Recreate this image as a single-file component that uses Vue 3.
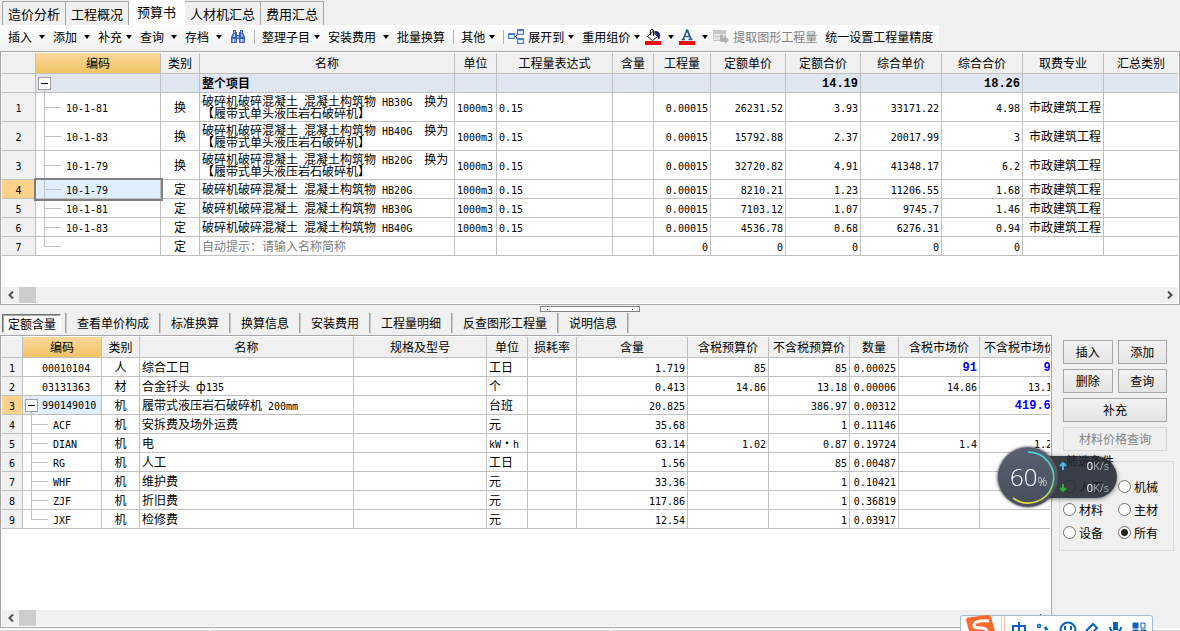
<script setup>
import { ref } from 'vue'

const viewTabs = ['造价分析', '工程概况', '预算书', '人材机汇总', '费用汇总']
const activeView = ref('预算书')

const detailTabs = ['定额含量', '查看单价构成', '标准换算', '换算信息', '安装费用', '工程量明细', '反查图形工程量', '说明信息']
const activeDetail = ref('定额含量')

const tools = [
  { text: '插入', menu: 'wide' },
  { text: '添加', menu: 'wide' },
  { text: '补充', menu: 'tight' },
  { text: '查询', menu: 'wide' },
  { text: '存档', menu: 'wide' },
  { icon: 'find', label: '查找' },
  { sep: true },
  { text: '整理子目', menu: 'tight' },
  { text: '安装费用', menu: 'wide' },
  { text: '批量换算' },
  { sep: true },
  { text: '其他', menu: 'tight' },
  { sep: true },
  { icon: 'tree', text: '展开到', menu: 'tight', near: true },
  { text: '重用组价', menu: 'tight' },
  { icon: 'fill', label: '填充颜色', menu: 'wide', near: true },
  { icon: 'font', label: '字体颜色', menu: 'wide', near: true },
  { icon: 'extract', text: '提取图形工程量', disabled: true, near: true },
  { text: '统一设置工程量精度' }
]

const budgetCols = [
  { t: '', w: 34, k: 'no' },
  { t: '编码', w: 125, k: 'code' },
  { t: '类别', w: 39, k: 'mid' },
  { t: '名称', w: 255, k: 'txt' },
  { t: '单位', w: 42, k: 'txt' },
  { t: '工程量表达式', w: 116, k: 'txt' },
  { t: '含量', w: 41, k: 'num' },
  { t: '工程量', w: 57, k: 'num' },
  { t: '定额单价', w: 75, k: 'num' },
  { t: '定额合价', w: 75, k: 'num' },
  { t: '综合单价', w: 81, k: 'num' },
  { t: '综合合价', w: 81, k: 'num' },
  { t: '取费专业', w: 81, k: 'major' },
  { t: '汇总类别', w: 0, k: 'txt' }
]
const rock = '破碎机破碎混凝土 混凝土构筑物 '
const swap = '  换为\n【履带式单头液压岩石破碎机】'
const city = '市政建筑工程'
const budgetRows = [
  { cls: 'sum', c: ['', '', '', '整个项目', '', '', '', '', '', '14.19', '', '18.26', '', ''] },
  { cls: 'tall', c: ['1', '10-1-81', '换', rock + 'HB30G' + swap, '1000m3', '0.15', '', '0.00015', '26231.52', '3.93', '33171.22', '4.98', city, ''] },
  { cls: 'tall', c: ['2', '10-1-83', '换', rock + 'HB40G' + swap, '1000m3', '0.15', '', '0.00015', '15792.88', '2.37', '20017.99', '3', city, ''] },
  { cls: 'tall', c: ['3', '10-1-79', '换', rock + 'HB20G' + swap, '1000m3', '0.15', '', '0.00015', '32720.82', '4.91', '41348.17', '6.2', city, ''] },
  { cls: 'current framed', c: ['4', '10-1-79', '定', rock + 'HB20G', '1000m3', '0.15', '', '0.00015', '8210.21', '1.23', '11206.55', '1.68', city, ''] },
  { c: ['5', '10-1-81', '定', rock + 'HB30G', '1000m3', '0.15', '', '0.00015', '7103.12', '1.07', '9745.7', '1.46', city, ''] },
  { c: ['6', '10-1-83', '定', rock + 'HB40G', '1000m3', '0.15', '', '0.00015', '4536.78', '0.68', '6276.31', '0.94', city, ''] },
  { cls: 'end hint', c: ['7', '', '定', '自动提示：请输入名称简称', '', '', '', '0', '0', '0', '0', '0', '', ''] }
]

const detailCols = [
  { t: '', w: 21, k: 'no' },
  { t: '编码', w: 79, k: 'code' },
  { t: '类别', w: 38, k: 'mid' },
  { t: '名称', w: 214, k: 'txt' },
  { t: '规格及型号', w: 133, k: 'txt' },
  { t: '单位', w: 41, k: 'txt' },
  { t: '损耗率', w: 49, k: 'num' },
  { t: '含量', w: 111, k: 'num' },
  { t: '含税预算价', w: 81, k: 'num' },
  { t: '不含税预算价', w: 81, k: 'num' },
  { t: '数量', w: 49, k: 'num' },
  { t: '含税市场价', w: 81, k: 'num market' },
  { t: '不含税市场价', w: 81, k: 'num market' }
]
const detailRows = [
  { cls: 'leaf adjusted', c: ['1', '00010104', '人', '综合工日', '', '工日', '', '1.719', '85', '85', '0.00025', '91', '91'] },
  { cls: 'leaf', c: ['2', '03131363', '材', '合金钎头 ф135', '', '个', '', '0.413', '14.86', '13.18', '0.00006', '14.86', '13.18'] },
  { cls: 'parent current adjusted', c: ['3', '990149010', '机', '履带式液压岩石破碎机 200mm', '', '台班', '', '20.825', '', '386.97', '0.00312', '', '419.64'] },
  { c: ['4', 'ACF', '机', '安拆费及场外运费', '', '元', '', '35.68', '', '1', '0.11146', '', '1'] },
  { c: ['5', 'DIAN', '机', '电', '', 'kW·h', '', '63.14', '1.02', '0.87', '0.19724', '1.4', '1.24'] },
  { c: ['6', 'RG', '机', '人工', '', '工日', '', '1.56', '', '85', '0.00487', '', '91'] },
  { c: ['7', 'WHF', '机', '维护费', '', '元', '', '33.36', '', '1', '0.10421', '', '1'] },
  { c: ['8', 'ZJF', '机', '折旧费', '', '元', '', '117.86', '', '1', '0.36819', '', '1'] },
  { cls: 'end', c: ['9', 'JXF', '机', '检修费', '', '元', '', '12.54', '', '1', '0.03917', '', '1'] }
]

// Latin runs use a half-width monospace face next to the full-width characters.
const runs = (s) => (s.match(/[\x20-\x7e]+|[^\x20-\x7e]+/g) || []).map((t) => ({ t, latin: /^[\x20-\x7e]/.test(t) }))

const kinds = ['人工', '机械', '材料', '主材', '设备', '所有']
const kind = ref('所有')
</script>

<template>
  <div class="app">
    <nav class="views">
      <button v-for="t in viewTabs" :key="t" type="button" :class="{ active: t === activeView }" @click="activeView = t">{{ t }}</button>
    </nav>

    <div class="toolbar" role="toolbar">
      <template v-for="(t, i) in tools" :key="i">
        <span v-if="t.sep" class="sep"></span>
        <button v-else type="button" class="tool" :class="[t.menu, { near: t.near }]" :disabled="t.disabled" :aria-label="t.label">
          <svg v-if="t.icon === 'find'" class="ico" viewBox="0 0 16 16">
            <path d="M3 1h3v2h1v3h2V3h1V1h3v3l2 4v6h-6v-4H7v4H1V8l2-4z" fill="#3a62ad" />
            <path d="M4 2h1v2H4zM11 2h1v2h-1zM4 5h1v3H3zM11 5h1l1 3h-2z" fill="#a9c8f2" />
            <path d="M2 10h4v3H2zM10 10h4v3h-4z" fill="#7ea6e0" />
            <path d="M3 10h1v3H3zM11 10h1v3h-1z" fill="#dceaff" />
            <path d="M7 7h2v2H7z" fill="#8fb0e4" />
          </svg>
          <svg v-else-if="t.icon === 'tree'" class="ico" viewBox="0 0 16 16">
            <path d="M6 7.500h2L10 4M8 7.500l2 4" stroke="#222" fill="none" />
            <path d="M0 4h7v6H0zM9 0h7v6H9zM9 9h7v6H9z" fill="#4a7dd0" />
            <path d="M1 6h5v3H1zM10 2h5v3h-5zM10 11h5v3h-5z" fill="#cfe2fb" />
            <path d="M2 7h3v1H2zM11 3h3v1h-3zM11 12h3v1h-3z" fill="#fff" />
          </svg>
          <svg v-else-if="t.icon === 'fill'" class="ico" viewBox="0 0 16 16">
            <path d="M2.500 7.500l5-4.500 5 4.500-5 4z" fill="#fff" stroke="#111" />
            <path d="M5.500 6V2q0-1.500 1.500-1.500T8.500 2v5" fill="none" stroke="#111" />
            <path d="M10 2q5 0 5 5 0 3-1 3-1.500 0-1.500-3L9 3z" fill="#111a7c" />
            <path d="M0 12h16v4H0z" fill="#f00" />
          </svg>
          <svg v-else-if="t.icon === 'font'" class="ico" viewBox="0 0 16 16">
            <path d="M4 10.500L8 1l4 9.500M5.500 7.500h5M2.500 10.500H6M9.500 10.500h4M8.500 1l3.500 9" stroke="#2b579a" stroke-width="1.600" fill="none" />
            <path d="M0 12h16v4H0z" fill="#f00" />
          </svg>
          <svg v-else-if="t.icon === 'extract'" class="ico" viewBox="0 0 16 16">
            <path d="M0 1h13v11H0z" fill="#c8c8c8" />
            <path d="M1 5h11v2H1zM1 8h6v3H1z" fill="#e4e4e4" />
            <path d="M7 6h3v3h2V7l4 4-4 4v-2H9q-2 0-2-2z" fill="#b2b2b2" />
          </svg>
          <span v-if="t.text">{{ t.text }}</span>
          <svg v-if="t.menu" class="caret" viewBox="0 0 6 4"><path d="M0 0h6L3 4z" fill="#000" /></svg>
        </button>
      </template>
    </div>

    <section class="pane budget">
      <div class="clip">
        <table class="fill">
          <colgroup>
            <col v-for="c in budgetCols" :key="c.t" :style="c.w ? { width: c.w + 'px' } : null">
          </colgroup>
          <thead>
            <tr><th v-for="c in budgetCols" :key="c.t" :class="c.k">{{ c.t }}</th></tr>
          </thead>
          <tbody>
            <tr v-for="(r, i) in budgetRows" :key="i" :class="r.cls">
              <td v-for="(v, j) in r.c" :key="j" :class="budgetCols[j].k"><button v-if="r.cls === 'sum' && j === 1" type="button" class="fold" aria-label="折叠"></button><span v-for="(s, n) in runs(v)" :key="n" :class="{ latin: s.latin }">{{ s.t }}</span></td>
            </tr>
          </tbody>
        </table>
      </div>
      <div class="scroll">
        <button type="button" aria-label="向左"><svg viewBox="0 0 6 8"><path d="M5 0.500L1.500 4 5 7.500" /></svg></button>
        <span class="thumb"></span>
        <button type="button" class="last" aria-label="向右"><svg viewBox="0 0 6 8"><path d="M1 0.500L4.500 4 1 7.500" /></svg></button>
      </div>
    </section>

    <div class="middle">
      <div class="grip"><i></i><i></i></div>
      <nav class="details">
        <button v-for="t in detailTabs" :key="t" type="button" :class="{ active: t === activeDetail }" @click="activeDetail = t"><span>{{ t }}</span></button>
      </nav>
    </div>

    <div class="lower">
      <section class="pane">
        <div class="clip">
          <table class="detail">
            <colgroup>
              <col v-for="c in detailCols" :key="c.t" :style="{ width: c.w + 'px' }">
            </colgroup>
            <thead>
              <tr><th v-for="c in detailCols" :key="c.t" :class="c.k">{{ c.t }}</th></tr>
            </thead>
            <tbody>
              <tr v-for="(r, i) in detailRows" :key="i" :class="r.cls">
                <td v-for="(v, j) in r.c" :key="j" :class="detailCols[j].k"><button v-if="i === 2 && j === 1" type="button" class="fold" aria-label="折叠"></button><span v-for="(s, n) in runs(v)" :key="n" :class="{ latin: s.latin }">{{ s.t }}</span></td>
              </tr>
            </tbody>
          </table>
        </div>
        <div class="scroll">
          <button type="button" aria-label="向左"><svg viewBox="0 0 6 8"><path d="M5 0.500L1.500 4 5 7.500" /></svg></button>
          <span class="thumb"></span>
          <button type="button" class="last" aria-label="向右"><svg viewBox="0 0 6 8"><path d="M1 0.500L4.500 4 1 7.500" /></svg></button>
        </div>
      </section>

      <aside class="side">
        <div class="actions">
          <button type="button">插入</button>
          <button type="button">添加</button>
          <button type="button">删除</button>
          <button type="button">查询</button>
          <button type="button" class="full">补充</button>
          <button type="button" class="full" disabled>材料价格查询</button>
        </div>
        <fieldset>
          <legend>筛选条件</legend>
          <div class="kinds">
            <label v-for="k in kinds" :key="k"><input v-model="kind" type="radio" name="kind" :value="k">{{ k }}</label>
          </div>
        </fieldset>
      </aside>
    </div>

    <footer class="status"><span></span><span></span><span></span></footer>

    <div class="monitor">
      <div class="speed">
        <p>
          <svg viewBox="0 0 8 8"><path d="M4 8V2M1 4l3-3 3 3" stroke="#4fb4ee" /></svg>
          <span><b>0</b>K/s</span>
        </p>
        <p>
          <svg viewBox="0 0 8 8"><path d="M4 0v6M1 4l3 3 3-3" stroke="#2fae3c" /></svg>
          <span><b>0</b>K/s</span>
        </p>
      </div>
      <div class="dial">
        <svg viewBox="0 0 60 60">
          <defs>
            <linearGradient id="arc" x1="0" y1="0" x2="0" y2="1">
              <stop offset="0" stop-color="#3fe0d8" />
              <stop offset="0.550" stop-color="#62d8a0" />
              <stop offset="1" stop-color="#e6dc3c" />
            </linearGradient>
          </defs>
          <path d="M30 5a25.500 25.500 0 1 1-15 46" fill="none" stroke="url(#arc)" stroke-width="1.600" />
        </svg>
        <span class="pct">60<small>%</small></span>
      </div>
    </div>

    <div class="ime">
      <svg class="brand" viewBox="0 0 30 16">
        <path d="M1 5q0-2 2-2.500L23 0q2 0 3 2l4 14H4z" fill="#fb6a2f" />
        <path d="M24 6Q11 5 9 9.500 8 13 15 13q6 0 7 3" fill="none" stroke="#fff" stroke-width="3" />
      </svg>
      <span class="bars"></span>
      <svg class="glyphs" viewBox="0 0 138 16" fill="none" stroke="#0b61bf" stroke-width="2">
        <path d="M2 16v-5h12v5M8 7v9" />
        <circle cx="28" cy="11" r="1.500" stroke-width="1.500" /><path d="M34 12l2 3" stroke-width="3" />
        <circle cx="57" cy="15" r="7.500" /><path d="M54 11v4M60 11v4" />
        <path d="M75 16l7-7 4 4-3 3" />
        <path d="M104.500 7v8" stroke-width="5" /><path d="M99 12q0 5 5.500 5t5.500-5" />
        <path d="M122 8h5v5h-5zM122 15h5v3h-5zM130 15h5v3h-5z" fill="#0b61bf" stroke-width="1" /><path d="M130 8h4v5h-4z" stroke-width="1" />
      </svg>
    </div>
  </div>
</template>

<style>
html, body { margin: 0; background: #f0f0f0; }
</style>

<style scoped>
.app {
  display: flex;
  flex-direction: column;
  height: 100vh;
  overflow: hidden;
  font: 12px/12px "Noto Sans CJK SC", sans-serif;
  color: #000;
}
.app * { box-sizing: border-box; }
button { font: inherit; color: inherit; border: 0; padding: 0; background: none; white-space: nowrap; }

.views { display: flex; flex: none; align-items: flex-end; height: 25px; padding-left: 2px; font-size: 13px; }
.views button { height: 24px; padding: 0 5px; border: solid #a6a6a6; border-width: 1px 1px 0 0; background: #f0f0f0; }
.views button:first-child { border-left-width: 1px; }
.views button.active { height: 25px; padding: 0 8px 2px; border-color: #fff; background: #fff; }

.toolbar { display: flex; flex: none; align-self: flex-start; align-items: center; height: 24px; margin-bottom: 2px; padding-right: 6px; background: linear-gradient(#fff, #f1f1f1); }
.tool { display: flex; align-items: center; height: 22px; margin-left: 8px; gap: 4px; }
.near { margin-left: 5px; }
.tool:disabled { color: #808080; }
.wide { gap: 7px; }
.sep { width: 1px; height: 14px; margin: 0 -1px 0 8px; background: #b4b4b4; }
.ico { width: 16px; height: 16px; }
.caret { width: 6px; height: 4px; }

.pane { display: flex; flex-direction: column; min-width: 0; padding: 1px; border: 1px solid #a7a6aa; background: #fff; }
.budget { flex: 250 1 0; min-height: 0; }
.clip { flex: 1; min-height: 0; overflow: hidden; }

table { table-layout: fixed; border-collapse: separate; border-spacing: 0; }
.fill { width: 100%; }
.detail { width: 1059px; }
th, td { height: 19px; padding: 0; border: solid #bfbfbf; border-width: 0 1px 1px 0; white-space: pre; font-weight: normal; }
.fill th:last-child, .fill td:last-child { border-right: 0; }
th { height: 21px; background: #f0f0f0; text-align: center; }
th.code { background: linear-gradient(#fbd89c, #f1c363); }
.latin { font: 10px/8px "DejaVu Sans Mono", monospace; }
td.no { background: #f0f0f0; text-align: center; }
td.mid { text-align: center; }
td.txt { padding-left: 2px; }
td.major { padding-left: 6px; }
td.num { padding-right: 2px; text-align: right; }
td.code {
  padding-left: 30px;
  background-color: #fff;
  background-image: linear-gradient(#bfbfbf, #bfbfbf), linear-gradient(#bfbfbf, #bfbfbf);
  background-repeat: no-repeat;
  background-size: 1px 100%, 17px 1px;
  background-position: 8px 0, 8px 50%;
}
.tall td { height: 29px; }
.end td.code { background-size: 1px 50%, 17px 1px; }
.hint td.txt { color: #808080; }
.sum td { background-color: #dfe6f0; font-weight: bold; }
.sum td.no { background: #f0f0f0; }
.sum .latin, .adjusted .market .latin { font: bold 12px/12px "Liberation Mono", monospace; }
.sum td.code, .parent td.code { padding-left: 2px; background-size: 1px 4px, 0 0; background-position: 8px 100%, 0 0; }
.current td.no { background: #fdd28b; }
.current td.code { background-color: #dfefff; }
.framed td.code { position: relative; outline: 2px solid #808080; }
.leaf td.code { padding-left: 19px; background-image: none; }
.adjusted .market { color: #00f; }
.fold { width: 13px; height: 13px; margin-right: 4px; vertical-align: middle; border: 1px solid #a0a0a0; background: linear-gradient(#000, #000) center / 7px 1px no-repeat #fff; }

.scroll { display: flex; flex: none; height: 16px; background: #f0f0f0; }
.scroll button { display: flex; align-items: center; justify-content: center; width: 17px; }
.scroll svg { width: 6px; height: 8px; }
.scroll path { fill: none; stroke: #505050; stroke-width: 2; }
.scroll .last { margin-left: auto; }
.thumb { width: 17px; background: #cdcdcd; }

.middle { display: flex; flex: none; flex-direction: column; height: 30px; }
.grip { display: flex; align-self: center; justify-content: space-between; width: 100px; height: 6px; margin-top: 1px; padding: 2px 6px; border: 1px solid #808080; background: #fff; }
.grip i { width: 1px; height: 1px; background: #00008b; }
.details { display: flex; height: 22px; padding-left: 2px; align-items: center; }
.details button { height: 20px; padding: 0 10px; border-right: 1px solid #a0a0a0; box-shadow: 1px 0 #c8c8c8; }
.details button + button { padding-left: 11px; }
.details button.active { padding: 0 4px 0 0; }
.details button.active span { display: block; height: 19px; padding: 3px 4px 0 5px; border: 1px solid; border-color: #707070 #fff #fff #707070; background: #f8f8f8; box-shadow: inset 1px 1px #a8a8a8; }

.lower { display: flex; flex: 293 1 0; min-height: 0; }
.lower .pane { flex: 1; }
.side { flex: none; width: 128px; padding: 5px 13px 0 11px; }
.actions { display: grid; grid-template-columns: 1fr 1fr; gap: 5px; }
.actions button { height: 24px; border: 1px solid #a6a6a6; background: linear-gradient(#f2f2f2, #e4e4e4); }
.actions .full { grid-column: 1 / 3; }
.actions button:disabled { color: #838383; border-color: #d6d6d6; background: #efefef; }
fieldset { min-width: 0; margin: 2px -7px 0 -4px; padding: 6px 3px; border: 1px solid #dcdcdc; }
legend { height: 16px; margin-left: 3px; padding: 2px 0; }
.kinds { display: grid; grid-template-columns: 55px 1fr; grid-auto-rows: 23px; align-items: center; }
.kinds label { display: flex; align-items: center; gap: 3px; }
.kinds input { appearance: none; width: 13px; height: 13px; margin: 0; border: 1px solid #707070; border-radius: 50%; background: #fff; }
.kinds input:checked { background: radial-gradient(circle, #222 0 3px, #fff 4px); }

.status { display: flex; flex: none; gap: 2px; height: 3px; background: #fafafa; }
.status span { flex: 40; border-bottom: 1px solid #d4d4d4; }
.status span:first-child { flex: 21; }
.status span:last-child { flex: 57; }

.monitor { position: fixed; top: 447px; right: 63px; display: flex; align-items: center; height: 60px; width: 119px; font-family: "Open Sans", sans-serif; }
.dial { position: absolute; left: 0; top: 0; width: 60px; height: 60px; border-radius: 50%; background: linear-gradient(#596172, #464d5b); box-shadow: 0 0 3px #333; }
.dial svg { position: absolute; width: 60px; height: 60px; }
.pct { display: block; padding-left: 12px; color: #fff; font-size: 24px; font-weight: 300; line-height: 60px; }
.pct small { font-size: 12px; }
.speed { display: flex; flex-direction: column; width: 100%; height: 42px; padding: 0 8px 0 61px; border-radius: 21px; background: rgba(32, 36, 46, 0.88); box-shadow: 0 1px 4px rgba(0, 0, 0, 0.5); color: #a8abb2; font-size: 11px; }
.speed p { display: flex; flex: 1; align-items: center; justify-content: space-between; margin: 0; }
.speed p + p { border-top: 1px solid #3a3f4b; }
.speed svg { width: 8px; height: 8px; fill: none; stroke-width: 2; }
.speed b { color: #fff; font-weight: normal; }

.ime { position: fixed; right: 27px; bottom: 0; display: flex; align-items: flex-end; width: 193px; height: 16px; padding-left: 4px; border: solid #a9bccb; border-width: 1px 1px 0; border-radius: 3px 3px 0 0; background: #fff; }
.brand { width: 30px; height: 16px; }
.bars { width: 4px; height: 15px; margin: 0 6px; border: solid #f5c7b4; border-width: 0 1px; }
.glyphs { width: 138px; height: 16px; }
</style>
